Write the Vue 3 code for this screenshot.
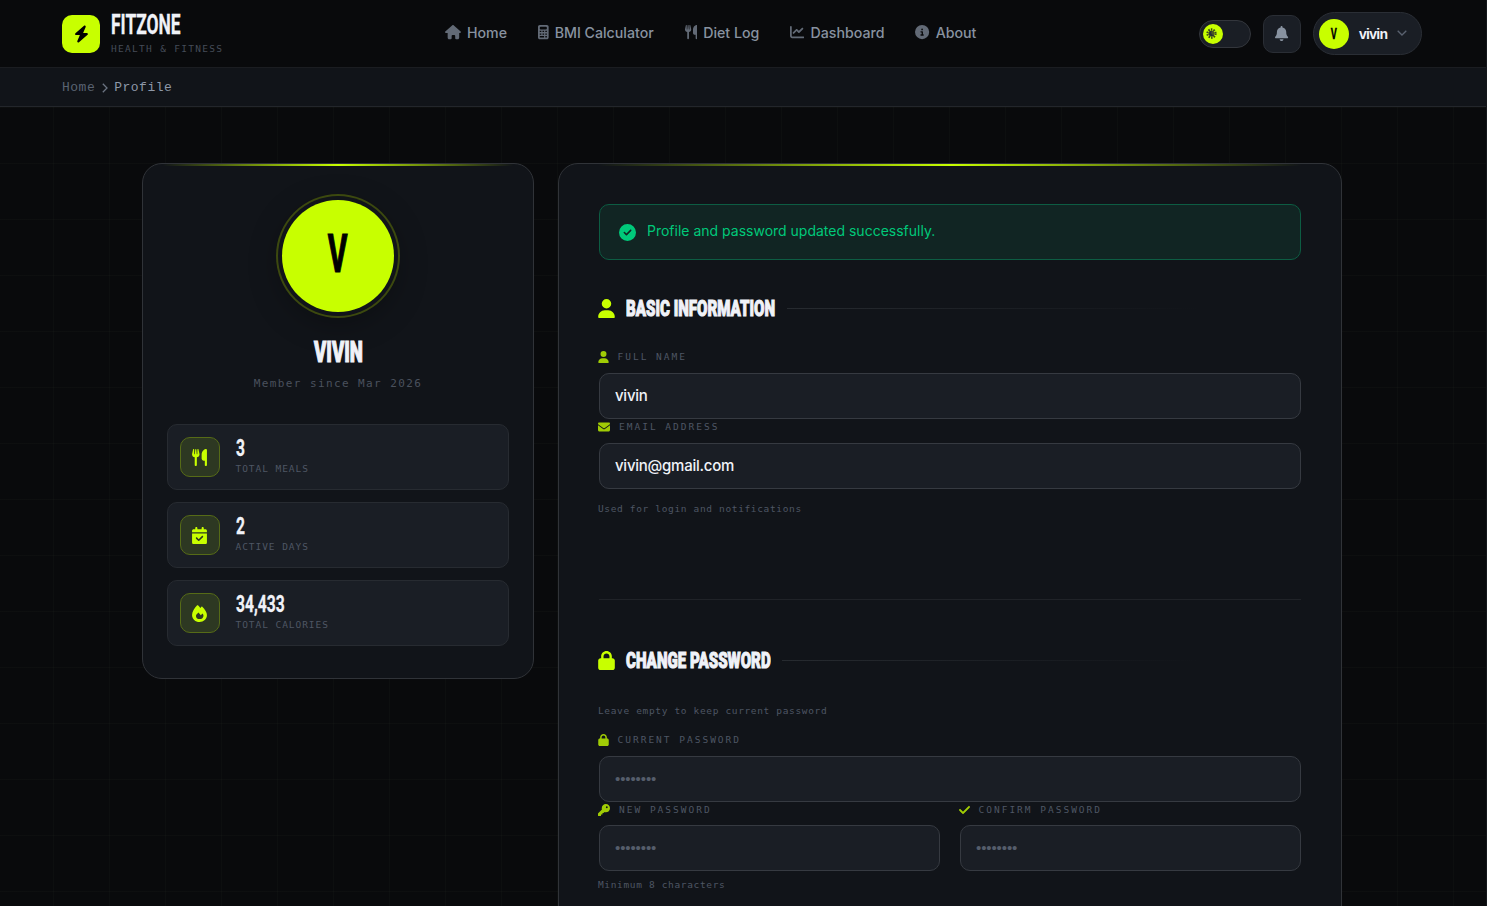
<template>
  <div class="page">
    <!-- TOP BAR -->
    <header class="topbar">
      <a class="brand">
        <span class="brand-mark">
          <svg viewBox="0 0 448 512" class="bolt"><path :d="icons.bolt" /></svg>
        </span>
        <span class="brand-text">
          <span class="brand-name"><b class="cond">FITZONE</b></span>
          <span class="brand-tag">HEALTH &amp; FITNESS</span>
        </span>
      </a>

      <nav class="nav">
        <a v-for="link in links" :key="link.label" class="nav-link">
          <svg :viewBox="link.box"><path :d="icons[link.icon]" fill-rule="evenodd" /></svg>
          <span>{{ link.label }}</span>
        </a>
      </nav>

      <div class="actions">
        <span class="switch">
          <span class="knob">
            <svg viewBox="0 0 16 16">
              <circle cx="8" cy="8" r="6" fill="none" stroke="#39451a" stroke-width="3" stroke-dasharray="2.2 1.6" />
              <circle cx="8" cy="8" r="4.5" fill="#4a5525" />
              <path d="M9 4a4 4 0 1 0 3 6 3.4 3.4 0 0 1-3-6z" fill="#242c35" />
            </svg>
          </span>
        </span>
        <button class="bell">
          <svg viewBox="0 0 448 512"><path :d="icons.bell" /></svg>
        </button>
        <button class="user">
          <span class="user-avatar"><b class="cond">V</b></span>
          <span class="user-name">vivin</span>
          <svg viewBox="0 0 10 6" class="chevron"><path d="M.7.7 5 5 9.3.7" /></svg>
        </button>
      </div>
    </header>

    <!-- BREADCRUMB -->
    <div class="crumbs">
      <span class="crumb">Home</span>
      <svg viewBox="0 0 6 10"><path d="M.8.8 5 5 .8 9.2" /></svg>
      <span class="crumb current">Profile</span>
    </div>

    <main class="content">
      <!-- PROFILE CARD -->
      <aside class="card profile">
        <div class="avatar"><b class="cond">V</b></div>
        <h2 class="name"><span class="cond">VIVIN</span></h2>
        <div class="since">Member since Mar 2026</div>
        <div class="stats">
          <div v-for="stat in stats" :key="stat.label" class="stat">
            <span class="stat-icon">
              <svg viewBox="0 0 448 512"><path :d="icons[stat.icon]" fill-rule="evenodd" /></svg>
            </span>
            <div>
              <div class="stat-value"><b class="cond">{{ stat.value }}</b></div>
              <div class="stat-label">{{ stat.label }}</div>
            </div>
          </div>
        </div>
      </aside>

      <!-- SETTINGS FORM -->
      <section class="card settings">
        <div class="alert">
          <svg viewBox="0 0 512 512"><path :d="icons.check" fill-rule="evenodd" /></svg>
          <span>Profile and password updated successfully.</span>
        </div>

        <h3 class="heading basic">
          <svg viewBox="0 0 448 512"><path :d="icons.user" /></svg>
          <span class="heading-text"><span class="cond">BASIC INFORMATION</span></span>
        </h3>

        <label class="label">
          <svg viewBox="0 0 448 512"><path :d="icons.user" /></svg>
          <span>FULL NAME</span>
        </label>
        <input class="input" type="text" value="vivin" />
        <label class="label tight">
          <svg viewBox="0 0 512 512" class="square"><path :d="icons.mail" /></svg>
          <span>EMAIL ADDRESS</span>
        </label>
        <input class="input" type="text" value="vivin@gmail.com" />
        <div class="hint">Used for login and notifications</div>

        <hr class="divider" />

        <h3 class="heading password">
          <svg viewBox="0 0 448 512"><path :d="icons.lock" fill-rule="evenodd" /></svg>
          <span class="heading-text"><span class="cond">CHANGE PASSWORD</span></span>
        </h3>
        <div class="hint lead">Leave empty to keep current password</div>
        <label class="label">
          <svg viewBox="0 0 448 512"><path :d="icons.lock" fill-rule="evenodd" /></svg>
          <span>CURRENT PASSWORD</span>
        </label>
        <input class="input" type="text" placeholder="••••••••" />
        <div class="pair">
          <div>
            <label class="label tight">
              <svg viewBox="0 0 512 512" class="square"><path :d="icons.key" fill-rule="evenodd" /></svg>
              <span>NEW PASSWORD</span>
            </label>
            <input class="input" type="text" placeholder="••••••••" />
            <div class="hint below">Minimum 8 characters</div>
          </div>
          <div>
            <label class="label tight">
              <svg viewBox="0 0 448 512" class="tick"><path :d="icons.tick" /></svg>
              <span>CONFIRM PASSWORD</span>
            </label>
            <input class="input" type="text" placeholder="••••••••" />
          </div>
        </div>
      </section>
    </main>
  </div>
</template>

<script setup>
const icons = {
  bolt: "M349 44.600c6-13.800 1.500-29.900-10.600-38.500s-28.300-8-39.400 1.800l-256 224c-10 8.800-13.600 22.900-8.900 35.300S50.700 288 64 288h111.500L99 467.400c-6 13.800-1.500 29.900 10.600 38.500s28.300 8 39.400-1.800l256-224c10-8.800 13.600-22.900 8.900-35.300s-16.600-20.700-30-20.700H272.500L349 44.600z",
  house: "M576 256c0 18-15 32-32 32h-32l1 160c0 35-22 64-57 64h-56c-18 0-32-14-32-32v-88c0-18-14-32-32-32h-64c-18 0-32 14-32 32v88c0 18-14 32-32 32h-56c-35 0-56-29-56-64V288H32c-18 0-32-14-32-32 0-10 4-18 11-24L266 8c13-11 31-11 44 0l255 224c8 6 12 14 11 24z",
  calc: "M64 0h256c35 0 64 29 64 64v384c0 35-29 64-64 64H64c-35 0-64-29-64-64V64C0 29 29 0 64 0zM96 64c-18 0-32 14-32 32v32c0 18 14 32 32 32h192c18 0 32-14 32-32V96c0-18-14-32-32-32zM64 208v48h56v-48zM164 208v48h56v-48zM264 208v48h56v-48zM64 304v48h56v-48zM164 304v48h56v-48zM264 304v48h56v-48zM64 400v48h156v-48zM264 400v48h56v-48z",
  utensils: "M416 0C400 0 288 32 288 176v112c0 35 29 64 64 64h32v128c0 18 14 32 32 32s32-14 32-32V32c0-18-14-32-32-32zM64 16C64 8 58 1 50 0s-15 4-18 11L2 146c-1 5-2 11-2 17 0 46 35 83 80 87v230c0 18 14 32 32 32s32-14 32-32V250c45-4 80-41 80-87 0-6-1-12-2-17L192 11c-2-8-10-12-18-11s-14 8-14 16v134c0 6-4 10-10 10s-9-4-10-9L128 15c-1-8-8-15-16-15S97 7 96 15L84 151c0 5-5 9-10 9-6 0-10-4-10-10z",
  chart: "M64 64c0-18-14-32-32-32S0 46 0 64v336c0 44 36 80 80 80h400c18 0 32-14 32-32s-14-32-32-32H80c-9 0-16-7-16-16zM471 151c12-13 12-33 0-46s-33-12-46 0L320 211l-57-58c-13-12-33-12-46 0L105 265c-12 13-12 33 0 46s33 12 46 0l89-90 57 58c13 12 33 12 46 0z",
  info: "M256 512a256 256 0 1 0 0-512 256 256 0 0 0 0 512zM216 336h24v-64h-24c-13 0-24-11-24-24s11-24 24-24h48c13 0 24 11 24 24v88h8c13 0 24 11 24 24s-11 24-24 24h-80c-13 0-24-11-24-24s11-24 24-24zM256 128a32 32 0 1 1 0 64 32 32 0 0 1 0-64z",
  bell: "M224 0c-18 0-32 14-32 32v19C119 66 64 131 64 208v19c0 47-17 92-48 128l-8 8c-8 10-10 23-5 34s16 19 29 19h384c13 0 24-8 29-19s3-25-5-34l-8-8c-31-36-48-81-48-128v-19c0-77-55-142-128-157V32c0-18-14-32-32-32zM269 493c12-12 19-28 19-45H160c0 17 7 33 19 45s28 19 45 19 33-7 45-19z",
  calendar: "M128 0c18 0 32 14 32 32v32h128V32c0-18 14-32 32-32s32 14 32 32v32h48c27 0 48 21 48 48v48H0v-48c0-27 21-48 48-48h48V32c0-18 14-32 32-32zM0 192h448v272c0 27-21 48-48 48H48c-27 0-48-21-48-48zM329 305c9-9 9-25 0-34s-25-9-34 0l-95 95-47-47c-9-9-25-9-34 0s-9 25 0 34l64 64c9 9 25 9 34 0z",
  fire: "M153 10c8-8 17-8 25 0 27 25 50 51 70 79 10-14 22-28 34-40 8-8 18-8 26 0 80 76 140 172 140 254 0 122-100 209-224 209S0 422 0 300C0 206 70 90 153 10zM226 425c70 0 118-45 118-103 0-28-14-50-30-68l-50 52-72-80c-40 42-74 64-74 103 0 56 38 96 108 96z",
  check: "M256 512a256 256 0 1 0 0-512 256 256 0 0 0 0 512zM369 209 241 337c-9 9-25 9-34 0l-64-64c-9-9-9-25 0-34s25-9 34 0l47 47 111-111c9-9 25-9 34 0s9 25 0 34z",
  user: "M224 256a128 128 0 1 0 0-256 128 128 0 0 0 0 256zM178 304C80 304 0 384 0 482c0 17 13 30 30 30h388c17 0 30-13 30-30 0-98-80-178-178-178z",
  mail: "M48 64C22 64 0 86 0 112c0 15 7 29 19 38l218 164c11 8 27 8 38 0l218-164c12-9 19-23 19-38 0-26-22-48-48-48zM0 176v208c0 35 29 64 64 64h384c35 0 64-29 64-64V176L294 339c-23 17-53 17-76 0z",
  lock: "M144 144v48h160v-48c0-44-36-80-80-80s-80 36-80 80zM80 192v-48C80 65 145 0 224 0s144 65 144 144v48h16c35 0 64 29 64 64v192c0 35-29 64-64 64H64c-35 0-64-29-64-64V256c0-35 29-64 64-64z",
  key: "M336 352c97 0 176-79 176-176S433 0 336 0 160 79 160 176c0 19 3 37 8 54L7 391c-5 4-7 11-7 17v80c0 13 11 24 24 24h80c13 0 24-11 24-24v-40h40c13 0 24-11 24-24v-40h40c6 0 13-3 17-7l33-33c17 5 35 8 54 8zM376 96a40 40 0 1 1 0 80 40 40 0 0 1 0-80z",
  tick: "M439 105c12 13 12 33 0 46L183 407c-13 12-33 12-46 0L9 279c-12-13-12-33 0-46s33-12 46 0l105 106 233-234c13-12 33-12 46 0z",
};

const links = [
  { label: "Home", icon: "house", box: "0 0 576 512" },
  { label: "BMI Calculator", icon: "calc", box: "0 0 384 512" },
  { label: "Diet Log", icon: "utensils", box: "0 0 448 512" },
  { label: "Dashboard", icon: "chart", box: "0 0 512 512" },
  { label: "About", icon: "info", box: "0 0 512 512" },
];

const stats = [
  { value: "3", label: "TOTAL MEALS", icon: "utensils" },
  { value: "2", label: "ACTIVE DAYS", icon: "calendar" },
  { value: "34,433", label: "TOTAL CALORIES", icon: "fire" },
];
</script>

<style>
body {
  margin: 0;
  background: #090a0c;
  overflow: hidden;
}
</style>

<style scoped>
* { box-sizing: border-box; }

.page {
  height: 906px;
  overflow: hidden;
  border-right: 1px solid #14171b;
  background-color: #090a0c;
  background-image:
    linear-gradient(rgba(220, 255, 180, 0.018) 1px, transparent 1px),
    linear-gradient(90deg, rgba(220, 255, 180, 0.018) 1px, transparent 1px);
  background-size: 56px 56px;
  background-position: 53px 51px;
  font-family: "Inter", sans-serif;
  color: #f0f2f8;
}

svg { display: block; flex: none; fill: currentColor; }

/* condensed display lettering */
.cond {
  display: inline-block;
  font-family: "Roboto", "Liberation Sans", sans-serif;
  font-weight: 700;
  white-space: nowrap;
  transform-origin: left center;
  -webkit-text-stroke: 0.3px currentColor;
}

/* ── Top bar ── */
.topbar {
  height: 68px;
  padding: 0 64px 0 62px;
  display: flex;
  align-items: center;
  justify-content: space-between;
  background: #090a0c;
  border-bottom: 1px solid #1b1d21;
}

.brand { display: flex; align-items: center; gap: 11px; width: 383px; }

.brand-mark {
  width: 38px;
  height: 38px;
  border-radius: 10px;
  background: #c8ff00;
  color: #000;
  display: grid;
  place-items: center;
}

.bolt { width: 15px; height: 18px; }
.brand-text { display: flex; flex-direction: column; }
.brand-name { height: 26px; line-height: 26px; font-size: 27px; }
.brand-name .cond { transform: scaleX(0.645); }

.brand-tag {
  margin-top: 4px;
  font: 9.5px/14px "DejaVu Sans Mono", monospace;
  letter-spacing: 1.3px;
  color: #454c58;
}

.nav { display: flex; flex: 1; gap: 31px; padding-bottom: 2px; }

.nav-link {
  display: flex;
  align-items: center;
  gap: 6px;
  font-size: 14.2px;
  font-weight: 500;
  color: #8892a0;
}

.nav-link svg { height: 14.2px; color: #626a76; }
.nav-link span { white-space: nowrap; }

.actions { display: flex; align-items: center; gap: 12px; }

.switch {
  width: 52px;
  height: 28px;
  padding: 3px;
  border: 1px solid #33363c;
  border-radius: 14px;
  background: #1a1e25;
}

.knob {
  display: grid;
  place-items: center start;
  padding-left: 3px;
  width: 20px;
  height: 20px;
  border-radius: 50%;
  background: #c8ff00;
}

.knob svg { width: 11px; height: 11px; }

.bell {
  width: 38px;
  height: 38px;
  padding: 0;
  border: 1px solid #2a2e35;
  border-radius: 10px;
  background: #1a1e25;
  color: #8892a0;
  display: grid;
  place-items: center;
}

.bell svg { height: 15px; }

.user {
  width: 109px;
  height: 43px;
  padding: 0 14px 0 5px;
  display: flex;
  align-items: center;
  border: 1px solid #2a2e35;
  border-radius: 22px;
  background: #1a1e25;
  color: #f0f2f8;
}

.user-avatar {
  width: 30px;
  height: 30px;
  border-radius: 50%;
  background: #c8ff00;
  color: #000;
  font-size: 15px;
  line-height: 29px;
  text-align: center;
}

.user-avatar .cond { transform: scaleX(0.62); transform-origin: center; }

.user-name {
  margin-left: 10px;
  flex: 1;
  text-align: left;
  font: 700 14px "Liberation Sans", sans-serif;
  letter-spacing: -0.7px;
}

.chevron { width: 10px; height: 6px; margin-bottom: 2px; fill: none; stroke: #5a6270; stroke-width: 1.3; }

/* ── Breadcrumb ── */
.crumbs {
  height: 39px;
  padding: 1px 62px 0;
  display: flex;
  align-items: center;
  background: #111419;
  border-bottom: 1px solid #23262b;
  font: 13px "Liberation Mono", monospace;
  letter-spacing: 0.5px;
}

.crumbs svg { width: 6px; height: 10px; margin: 0 6px 0 7px; fill: none; stroke: #6b7482; stroke-width: 1.3; }
.crumb { color: #5a6372; }
.crumb.current { color: #8e98a8; }

/* ── Cards ── */
.content {
  width: 1200px;
  margin: 56px 0 0 142px;
  display: flex;
  align-items: flex-start;
  gap: 24px;
}

.card {
  position: relative;
  background: #111419;
  border: 1px solid #303338;
  border-radius: 20px;
  overflow: hidden;
}

.card::before {
  content: "";
  position: absolute;
  top: 0;
  left: 0;
  right: 0;
  height: 2px;
  background: linear-gradient(90deg, transparent 5%, #c8ff00 50%, transparent 95%);
}

.profile {
  width: 392px;
  height: 516px;
  padding: 36px 24px;
  display: flex;
  flex-direction: column;
  align-items: center;
}

.avatar {
  width: 112px;
  height: 112px;
  flex: none;
  border-radius: 50%;
  background: #c8ff00;
  box-shadow: 0 0 0 4px #111419, 0 0 0 6px #3c490f, 0 8px 32px rgba(0, 0, 0, 0.35);
  color: #000;
  font-size: 54px;
  line-height: 106px;
  text-align: center;
}

.avatar .cond { transform: scaleX(0.56); transform-origin: center; -webkit-text-stroke: 1.2px currentColor; }

.name {
  margin: 24px 0 0;
  height: 30px;
  font-size: 30px;
  line-height: 30px;
}

.name .cond { transform: scaleX(0.62); transform-origin: center; font-weight: 900; -webkit-text-stroke: 1.2px currentColor; }

.since {
  margin-top: 9px;
  font: 11px/18px "DejaVu Sans Mono", monospace;
  letter-spacing: 1.4px;
  color: #4a515d;
}

.stats {
  width: 342px;
  margin-top: 31px;
  display: flex;
  flex-direction: column;
  gap: 12px;
}

.stat {
  height: 66px;
  padding: 0 12px;
  display: flex;
  align-items: center;
  gap: 15.5px;
  background: #1a1e25;
  border: 1px solid #272b31;
  border-radius: 10px;
}

.stat-icon {
  width: 40px;
  height: 40px;
  padding-right: 1px;
  border: 1px solid #566b17;
  border-radius: 10px;
  background: #2d3822;
  color: #c8ff00;
  display: grid;
  place-items: center;
}

.stat-icon svg { width: 15px; height: 17px; }
.stat-value { height: 24px; font-size: 23px; line-height: 23px; }
.stat-value .cond { transform: scaleX(0.68); }

.stat-label {
  font: 9.5px/16px "DejaVu Sans Mono", monospace;
  letter-spacing: 0.95px;
  color: #4e5664;
}

.settings { width: 784px; height: 900px; padding: 40px; }

.alert {
  height: 56px;
  padding: 0 19px;
  display: flex;
  align-items: center;
  gap: 11px;
  border: 1px solid #0d5d43;
  border-radius: 10px;
  background: #112523;
  color: #00c97a;
  font-size: 14px;
}

.alert svg { width: 17px; height: 17px; }
.alert span { padding-bottom: 3px; }

.heading {
  display: flex;
  align-items: center;
  height: 28px;
  margin: 34px 0 0 -1px;
  font-size: 22.5px;
  line-height: 28px;
}

.heading svg { width: 17px; height: 19px; color: #c8ff00; margin-right: 11px; }
.heading-text { width: 149px; }
.heading .cond { transform: scaleX(0.67); font-weight: 900; -webkit-text-stroke: 1.1px currentColor; }
.password .heading-text { width: 144px; }

.heading::after {
  content: "";
  flex: 1;
  height: 1px;
  margin-left: 12px;
  background: linear-gradient(90deg, #272b30, transparent 80%);
}

.label {
  display: flex;
  align-items: center;
  height: 16px;
  margin: 27px 0 8px -1px;
  font: 9.5px/16px "DejaVu Sans Mono", monospace;
  letter-spacing: 2px;
  color: #4e5664;
}

.label svg { height: 12px; width: 11px; margin-right: 8.5px; color: #a0cc05; }
.label svg.square { width: 12px; margin-right: 9px; }
.label .tick path { stroke: currentColor; stroke-width: 28; }
.label.tight { margin-top: 0; }

.input {
  display: block;
  width: 100%;
  height: 46px;
  padding: 0 15px 1px;
  border: 1px solid #363a41;
  border-radius: 10px;
  outline: none;
  background: #1a1e25;
  color: #f0f2f8;
  font: 500 15px "Inter", sans-serif;
  letter-spacing: -0.25px;
}

.input::placeholder {
  color: #555d6b;
  opacity: 1;
  font: 15px "Liberation Sans", sans-serif;
  letter-spacing: -0.1px;
}

.hint {
  margin: 12px 0 0 -1px;
  font: 9.5px/16px "DejaVu Sans Mono", monospace;
  letter-spacing: 0.65px;
  color: #4e5664;
}

.divider { height: 1px; margin: 82px 0 46px; border: 0; background: #202328; }
.heading.password { margin-top: 46px; }
.hint.lead { margin-top: 29px; }
.lead + .label { margin-top: 13px; }
.pair { display: grid; grid-template-columns: 1fr 1fr; gap: 20px; }
.pair .label { margin-bottom: 7px; }
.hint.below { margin-top: 6px; }
</style>
